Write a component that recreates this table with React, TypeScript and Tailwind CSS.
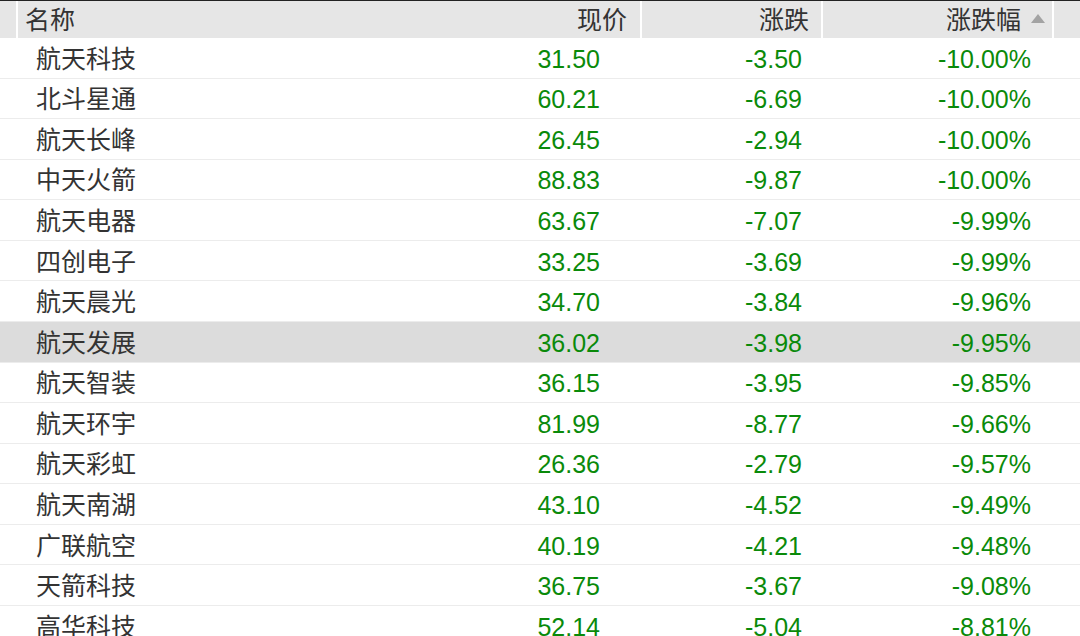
const rows = [
  { name: "航天科技", price: "31.50", change: "-3.50", pct: "-10.00%" },
  { name: "北斗星通", price: "60.21", change: "-6.69", pct: "-10.00%" },
  { name: "航天长峰", price: "26.45", change: "-2.94", pct: "-10.00%" },
  { name: "中天火箭", price: "88.83", change: "-9.87", pct: "-10.00%" },
  { name: "航天电器", price: "63.67", change: "-7.07", pct: "-9.99%" },
  { name: "四创电子", price: "33.25", change: "-3.69", pct: "-9.99%" },
  { name: "航天晨光", price: "34.70", change: "-3.84", pct: "-9.96%" },
  { name: "航天发展", price: "36.02", change: "-3.98", pct: "-9.95%" },
  { name: "航天智装", price: "36.15", change: "-3.95", pct: "-9.85%" },
  { name: "航天环宇", price: "81.99", change: "-8.77", pct: "-9.66%" },
  { name: "航天彩虹", price: "26.36", change: "-2.79", pct: "-9.57%" },
  { name: "航天南湖", price: "43.10", change: "-4.52", pct: "-9.49%" },
  { name: "广联航空", price: "40.19", change: "-4.21", pct: "-9.48%" },
  { name: "天箭科技", price: "36.75", change: "-3.67", pct: "-9.08%" },
  { name: "高华科技", price: "52.14", change: "-5.04", pct: "-8.81%" },
];

// 选中行
const selected = 7;

export default function App() {
  return (
    <div
      className="w-[1080px] h-[636px] overflow-hidden bg-white text-[25px] text-[#333333] leading-none"
      style={{ fontFamily: '"Liberation Sans", "Noto Sans CJK SC", sans-serif' }}
    >
      {/* 表头 */}
      <div className="border-t border-[#222222] bg-[#e6e6e6] h-[38px] flex">
        <div className="w-[18px] h-full border-r-2 border-white" />
        <div className="w-[624px] h-full border-r-2 border-white flex items-center justify-between pl-[7px] pr-[13px] pt-[1px]">
          <span>名称</span>
          <span>现价</span>
        </div>
        <div className="w-[181px] h-full border-r-2 border-white flex items-center justify-end pr-[12px] pt-[1px]">
          涨跌
        </div>
        <div className="w-[231px] h-full border-r-2 border-white flex items-center justify-end pr-[7px] pt-[1px]">
          <span>涨跌幅</span>
          <svg width="14" height="9" viewBox="0 0 14 9" className="ml-[10px] mb-[4px]">
            <polygon points="7,0 14,9 0,9" fill="#a3a3a3" />
          </svg>
        </div>
        <div className="flex-1" />
      </div>

      {/* 数据行 */}
      {rows.map((r, i) => (
        <div
          key={r.name}
          className={`h-[40.57px] flex items-center pt-[3px] border-b border-[#ececec] ${
            i === selected ? "bg-[#dcdcdc]" : "bg-white"
          }`}
        >
          <div className="w-[400px] pl-[36px]">{r.name}</div>
          <div className="w-[200px] text-right text-[#0a8a0a]">{r.price}</div>
          <div className="w-[202px] text-right text-[#0a8a0a]">{r.change}</div>
          <div className="w-[229px] text-right text-[#0a8a0a]">{r.pct}</div>
          <div className="flex-1" />
        </div>
      ))}
    </div>
  );
}
